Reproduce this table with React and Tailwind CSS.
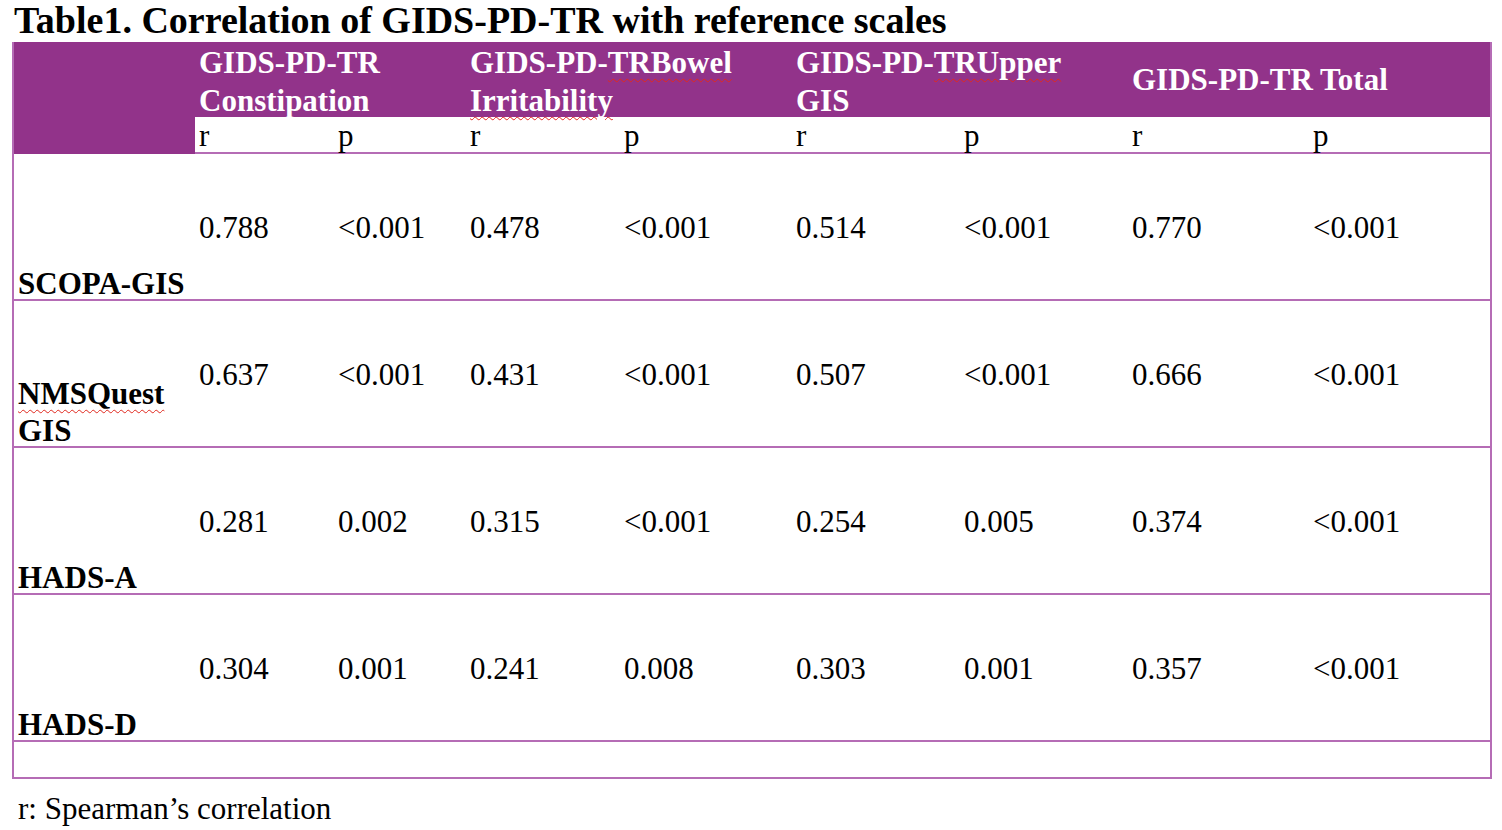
import React from 'react';

const cols = 'grid grid-cols-[181px_139px_132px_154px_172px_168px_168px_181px_181px]';

const rows = [
  { label: ['SCOPA-GIS'], values: ['0.788', '<0.001', '0.478', '<0.001', '0.514', '<0.001', '0.770', '<0.001'] },
  { label: ['NMSQuest', 'GIS'], values: ['0.637', '<0.001', '0.431', '<0.001', '0.507', '<0.001', '0.666', '<0.001'] },
  { label: ['HADS-A'], values: ['0.281', '0.002', '0.315', '<0.001', '0.254', '0.005', '0.374', '<0.001'] },
  { label: ['HADS-D'], values: ['0.304', '0.001', '0.241', '0.008', '0.303', '0.001', '0.357', '<0.001'] },
];

const Wavy = ({ children }) => (
  <span className="underline decoration-wavy decoration-[#e0281e] decoration-1 underline-offset-[5px]">
    {children}
  </span>
);

const App = () => {
  return (
    <div className="w-[1502px] h-[830px] bg-white text-black font-['Liberation_Serif',serif]">
      <h1 className="pl-[14px] h-[42px] text-[38px] leading-[40px] font-bold">
        Table1. Correlation of GIDS-PD-TR with reference scales
      </h1>

      <div className="ml-[12px] w-[1480px] border-2 border-t-0 border-[#b56cb5]">
        <div className={cols}>
          <div className="row-span-2 bg-[#92338a]" />
          <div className="col-span-2 h-[75px] bg-[#92338a] px-[4px] pt-[2px] text-[31px] leading-[38px] font-bold text-white">
            GIDS-PD-TR
            <br />
            Constipation
          </div>
          <div className="col-span-2 h-[75px] bg-[#92338a] px-[4px] pt-[2px] text-[31px] leading-[38px] font-bold text-white">
            GIDS-PD-<Wavy>TRBowel</Wavy>
            <br />
            <Wavy>Irritability</Wavy>
          </div>
          <div className="col-span-2 h-[75px] bg-[#92338a] px-[4px] pt-[2px] text-[31px] leading-[38px] font-bold text-white">
            GIDS-PD-<Wavy>TRUpper</Wavy>
            <br />
            GIS
          </div>
          <div className="col-span-2 h-[75px] bg-[#92338a] flex items-center pl-[4px] text-[31px] leading-[38px] font-bold text-white">
            GIDS-PD-TR Total
          </div>
          {['r', 'p', 'r', 'p', 'r', 'p', 'r', 'p'].map((t, i) => (
            <div key={i} className="h-[37px] pl-[4px] text-[31px] leading-[37px] border-b-2 border-[#b56cb5]">
              {t}
            </div>
          ))}
        </div>

        {rows.map((row) => (
          <div key={row.label[0]} className={`${cols} h-[147px] border-b-2 border-[#b56cb5]`}>
            <div className="flex flex-col justify-end pl-[4px] text-[31px] leading-[37px] font-bold translate-y-[3px]">
              {row.label.map((l, i) =>
                l === 'NMSQuest' ? (
                  <span key={i}>
                    <Wavy>{l}</Wavy>
                  </span>
                ) : (
                  <span key={i}>{l}</span>
                )
              )}
            </div>
            {row.values.map((v, i) => (
              <div key={i} className="flex items-center pl-[4px] pt-[2px] text-[31px] leading-[36px]">
                {v}
              </div>
            ))}
          </div>
        ))}

        <div className="h-[35px]" />
      </div>

      <p className="pl-[18px] pt-[12px] text-[31px] leading-[36px]">r: Spearman’s correlation</p>
    </div>
  );
};

export default App;
